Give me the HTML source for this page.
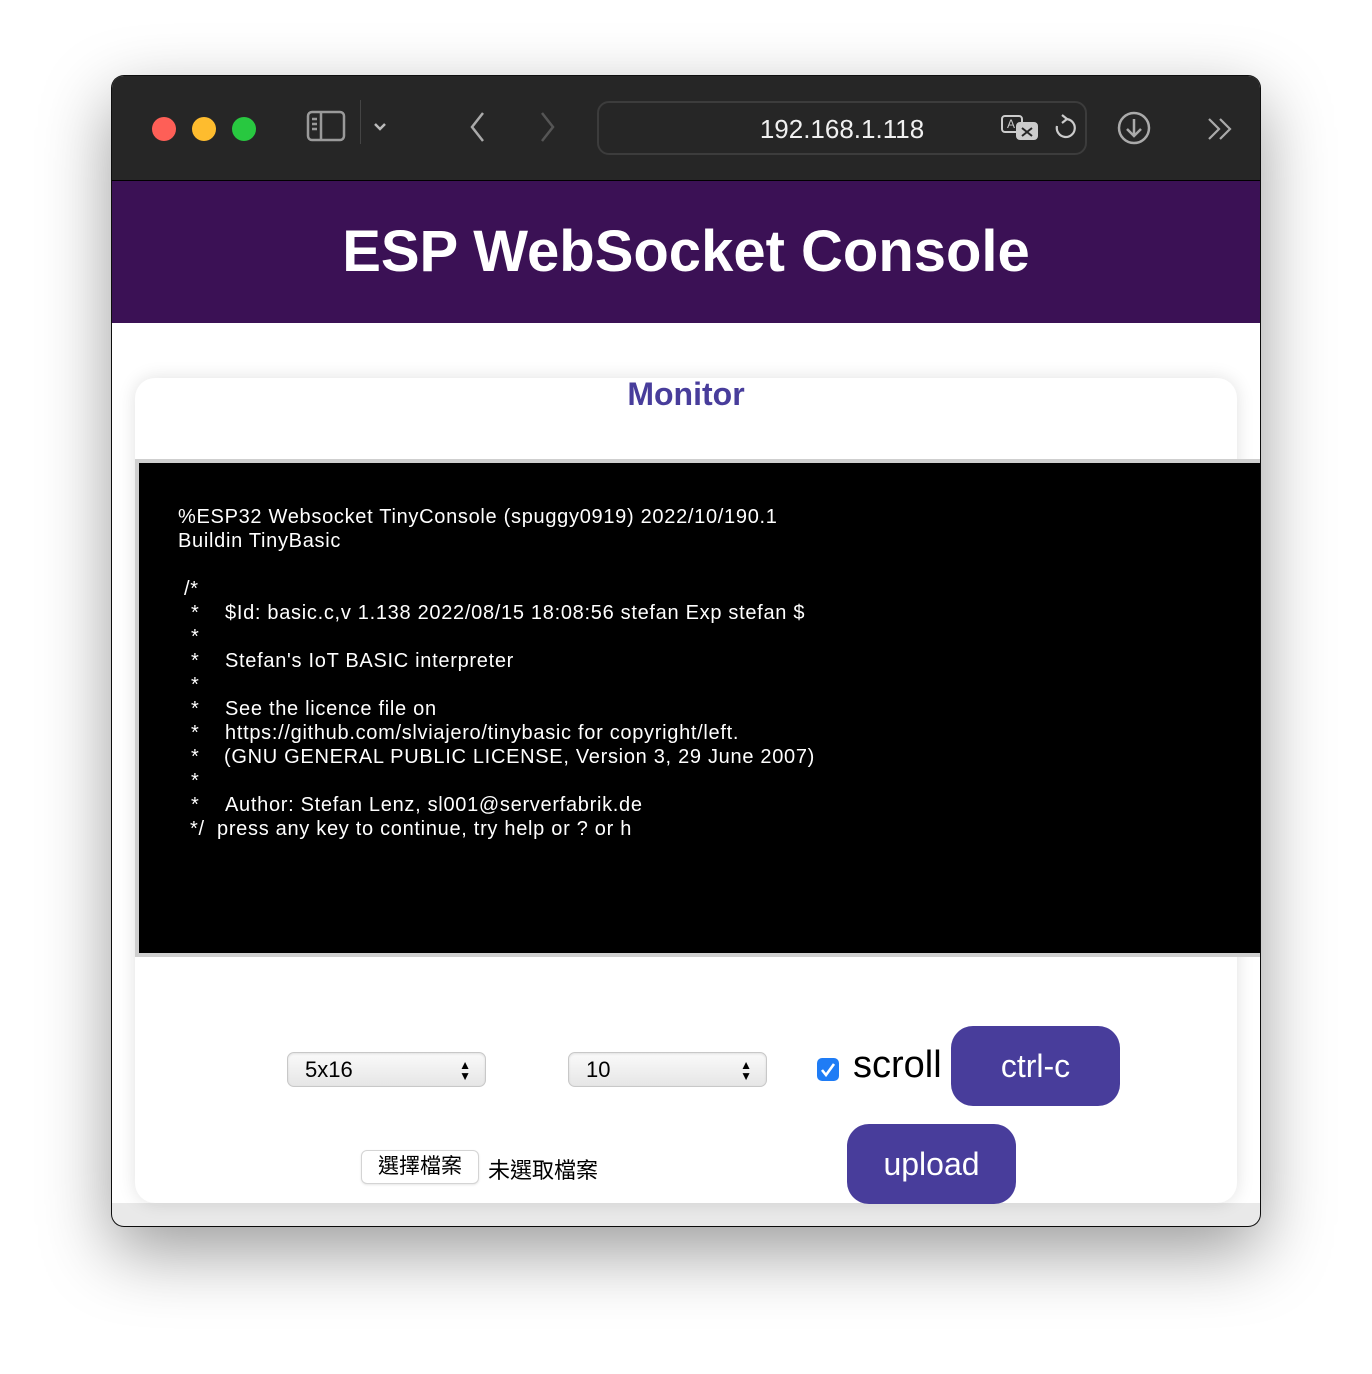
<!DOCTYPE html>
<html><head><meta charset="utf-8"><style>
*{margin:0;padding:0;box-sizing:border-box}
body{width:1372px;height:1374px;background:#fff;position:relative;overflow:hidden;font-family:"Liberation Sans","Noto Sans CJK TC",sans-serif}
.win{position:absolute;left:112px;top:76px;width:1148px;height:1150px;border-radius:12px;overflow:hidden;background:#e9e9e9;box-shadow:0 25px 70px rgba(0,0,0,.4),0 0 0 1px #111}
.tb{position:absolute;left:0;top:0;width:1148px;height:105px;background:#262626;border-bottom:1px solid #000}
.dot{position:absolute;top:41px;width:24px;height:24px;border-radius:50%}
.hdr{position:absolute;left:0;top:105px;width:1148px;height:142px;background:#3b1155;color:#fff;font-weight:bold;font-size:58px;text-align:center;line-height:142px}
.page{position:absolute;left:0;top:247px;width:1148px;height:880px;background:#fff}
.card{position:absolute;left:23px;top:302px;width:1102px;height:825px;background:#fff;border-radius:20px;box-shadow:0 0 18px rgba(0,0,0,.12)}
.mon{position:absolute;left:0;top:300px;width:1148px;text-align:center;color:#483d9b;font-weight:bold;font-size:32px}
.term{position:absolute;left:23px;top:383px;width:1130px;height:498px;background:#000;border:4px solid #cfcfcf;border-right:none}
.term div{position:absolute;color:#fff;font-size:20px;white-space:pre;line-height:24px;letter-spacing:0.7px}
.sel{position:absolute;height:35px;width:199px;border:1px solid #c8c8c8;border-radius:7px;background:linear-gradient(#fafafa,#e6e6e6);font-size:22px;line-height:33px;padding-left:17px;box-shadow:inset 0 1px 2px rgba(0,0,0,.1)}
.sel span{position:absolute;right:14px;font-size:12px;line-height:11px;top:7px}
.btn{position:absolute;width:169px;height:80px;border-radius:22px;background:#483d9b;color:#fff;font-size:32px;text-align:center;line-height:80px}
</style></head><body>
<div class="win">
 <div class="tb">
  <div class="dot" style="left:40px;background:#fe5f57"></div>
  <div class="dot" style="left:80px;background:#febc2e"></div>
  <div class="dot" style="left:120px;background:#28c840"></div>
  <svg style="position:absolute;left:194px;top:34px" width="40" height="34" viewBox="0 0 40 34" fill="none" stroke="#9a9a9a" stroke-width="2.5"><rect x="2" y="2" width="36" height="28" rx="4"/><line x1="15" y1="2" x2="15" y2="30"/><line x1="6" y1="9" x2="11" y2="9"/><line x1="6" y1="14" x2="11" y2="14"/><line x1="6" y1="19" x2="11" y2="19"/></svg>
  <div style="position:absolute;left:248px;top:24px;width:1px;height:44px;background:#444"></div>
  <svg style="position:absolute;left:261px;top:46px" width="14" height="10" viewBox="0 0 14 10" fill="none" stroke="#bbb" stroke-width="2.5"><path d="M2 2l5 5 5-5"/></svg>
  <svg style="position:absolute;left:355px;top:34px" width="20" height="34" viewBox="0 0 20 34" fill="none" stroke="#aaa" stroke-width="2.5"><path d="M16 3L5 17l11 14"/></svg>
  <svg style="position:absolute;left:426px;top:34px" width="20" height="34" viewBox="0 0 20 34" fill="none" stroke="#555" stroke-width="2.5"><path d="M4 3l11 14L4 31"/></svg>
  <div style="position:absolute;left:485px;top:25px;width:490px;height:54px;border:2px solid #3c3c3c;border-radius:12px"></div>
  <div style="position:absolute;left:485px;top:38px;width:490px;text-align:center;color:#f0f0f0;font-size:26px">192.168.1.118</div>
  <svg style="position:absolute;left:888px;top:38px" width="40" height="30" viewBox="0 0 40 30" fill="none" stroke="#ccc" stroke-width="2"><rect x="2" y="2" width="20" height="16" rx="3"/><text x="7" y="14" font-size="12" fill="#ccc" stroke="none" font-family="Liberation Sans">A</text><rect x="17" y="9" width="20" height="16" rx="3" fill="#ccc"/><path d="M22 14l10 8M32 14l-10 8" stroke="#262626"/></svg>
  <svg style="position:absolute;left:940px;top:38px" width="24" height="28" viewBox="0 0 24 28" fill="none" stroke="#ccc" stroke-width="2.2"><path d="M14 5a9 9 0 1 1-9 7"/><path d="M10 1l5 4-5 4"/></svg>
  <svg style="position:absolute;left:1004px;top:34px" width="36" height="36" viewBox="0 0 36 36" fill="none" stroke="#aaa" stroke-width="2.5"><circle cx="18" cy="18" r="15"/><path d="M18 9v17M11 19l7 7 7-7"/></svg>
  <svg style="position:absolute;left:1094px;top:40px" width="28" height="26" viewBox="0 0 28 26" fill="none" stroke="#aaa" stroke-width="2.2"><path d="M3 3l10 10L3 23M14 3l10 10-10 10"/></svg>
 </div>
 <div class="hdr">ESP WebSocket Console</div>
 <div class="page"></div>
 <div class="card"></div>
 <div class="mon">Monitor</div>
 <div class="term">
  <div style="left:39px;top:42px">%ESP32 Websocket TinyConsole (spuggy0919) 2022/10/190.1</div>
  <div style="left:39px;top:66px">Buildin TinyBasic</div>
  <div style="left:45px;top:114px">/*</div>
  <div style="left:52px;top:138px">*</div><div style="left:86px;top:138px">$Id: basic.c,v 1.138 2022/08/15 18:08:56 stefan Exp stefan $</div>
  <div style="left:52px;top:162px">*</div>
  <div style="left:52px;top:186px">*</div><div style="left:86px;top:186px">Stefan's IoT BASIC interpreter</div>
  <div style="left:52px;top:210px">*</div>
  <div style="left:52px;top:234px">*</div><div style="left:86px;top:234px">See the licence file on</div>
  <div style="left:52px;top:258px">*</div><div style="left:86px;top:258px">https://github.com/slviajero/tinybasic for copyright/left.</div>
  <div style="left:52px;top:282px">*</div><div style="left:85px;top:282px">(GNU GENERAL PUBLIC LICENSE, Version 3, 29 June 2007)</div>
  <div style="left:52px;top:306px">*</div>
  <div style="left:52px;top:330px">*</div><div style="left:86px;top:330px">Author: Stefan Lenz, sl001@serverfabrik.de</div>
  <div style="left:51px;top:354px">*/</div><div style="left:78px;top:354px">press any key to continue, try help or ? or h</div>
 </div>
 <div class="sel" style="left:175px;top:976px">5x16<span>▲<br>▼</span></div>
 <div class="sel" style="left:456px;top:976px">10<span>▲<br>▼</span></div>
 <div style="position:absolute;left:705px;top:982px;width:22px;height:23px;border-radius:5px;background:#1f7cf5"><svg width="22" height="23" viewBox="0 0 22 23" fill="none" stroke="#fff" stroke-width="2.6"><path d="M5 12l4 5 8-11"/></svg></div>
 <div style="position:absolute;left:741px;top:968px;font-size:38px;color:#000">scroll</div>
 <div class="btn" style="left:839px;top:950px">ctrl-c</div>
 <div class="btn" style="left:735px;top:1048px">upload</div>
 <div style="position:absolute;left:249px;top:1074px;width:118px;height:34px;border:1px solid #d4d4d4;border-radius:6px;background:#fff;font-size:21px;line-height:32px;text-align:center;box-shadow:0 1px 2px rgba(0,0,0,.1)">選擇檔案</div>
 <div style="position:absolute;left:376px;top:1077px;font-size:22px">未選取檔案</div>
</div>
</body></html>
